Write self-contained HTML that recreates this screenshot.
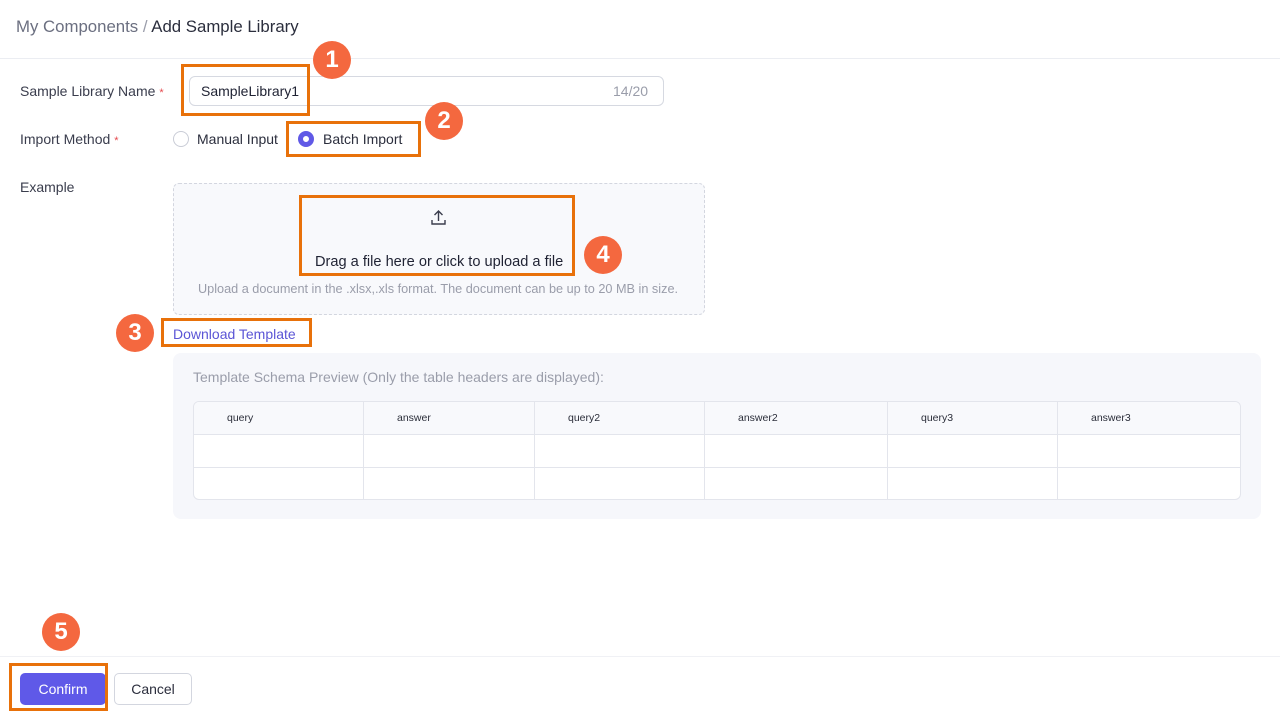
<!DOCTYPE html><html><head><style>
*{margin:0;padding:0;box-sizing:border-box}
body{width:1280px;height:720px;background:#fff;font-family:"Liberation Sans",sans-serif;position:relative;overflow:hidden;color:#1f2233}
.a{position:absolute}
.ob{position:absolute;border:3px solid #e8710a}
.bd{position:absolute;width:38px;height:38px;border-radius:50%;background:#f4683f;color:#fff;font-size:24px;font-weight:bold;text-align:center;line-height:38px}
.lbl{position:absolute;left:20px;font-size:14px;color:#3a3d4d}
.req{color:#e5484d;font-size:11px;margin-left:4px}
.radio{position:absolute;width:16px;height:16px;border-radius:50%;border:1px solid #c9ccd6;background:#fff}
table{border-collapse:separate;border-spacing:0}
td{border-right:1px solid #e3e5ec;border-bottom:1px solid #e3e5ec;height:33px;font-size:10.5px;color:#2b2e3a;padding-left:33px}
</style></head><body>
<div class="a" style="left:16px;top:17px;font-size:16.8px;color:#6b6f80">My Components <span style="color:#9a9daa">/</span> <span style="color:#2b2e3d">Add Sample Library</span></div>
<div class="a" style="left:0;top:58px;width:1280px;height:1px;background:#ebedf2"></div>

<div class="lbl" style="top:83px">Sample Library Name<span class="req">*</span></div>
<div class="a" style="left:189px;top:76px;width:475px;height:30px;border:1px solid #d6d9e1;border-radius:6px"></div>
<div class="a" style="left:201px;top:83px;font-size:14px">SampleLibrary1</div>
<div class="a" style="left:613px;top:83px;font-size:14px;color:#9a9daa">14/20</div>

<div class="lbl" style="top:131px">Import Method<span class="req">*</span></div>
<div class="radio" style="left:173px;top:131px"></div>
<div class="a" style="left:197px;top:131px;font-size:14px;color:#2b2e3d">Manual Input</div>
<div class="radio" style="left:298px;top:131px;border:5px solid #6059e6"></div>
<div class="a" style="left:323px;top:131px;font-size:14px;color:#2b2e3d">Batch Import</div>

<div class="lbl" style="top:179px">Example</div>
<div class="a" style="left:173px;top:183px;width:532px;height:132px;border:1px dashed #d3d6df;border-radius:6px;background:#f8f9fc"></div>
<svg class="a" style="left:430px;top:209px" width="17" height="17" viewBox="0 0 17 17" fill="none" stroke="#3a3d4d" stroke-width="1.4"><path d="M8.5 12V2M4.5 6l4-4 4 4M2 11v4h13v-4"/></svg>
<div class="a" style="left:315px;top:254px;font-size:14.6px">Drag a file here or click to upload a file</div>
<div class="a" style="left:198px;top:282px;font-size:12.7px;color:#9a9daa">Upload a document in the .xlsx,.xls format. The document can be up to 20 MB in size.</div>
<div class="a" style="left:173px;top:326px;font-size:14px;color:#5b55d6">Download Template</div>

<div class="a" style="left:173px;top:353px;width:1088px;height:166px;background:#f6f7fb;border-radius:8px"></div>
<div class="a" style="left:193px;top:369px;font-size:14px;color:#9a9daa">Template Schema Preview (Only the table headers are displayed):</div>
<div class="a" style="left:193px;top:401px;width:1048px;height:99px;border:1px solid #e3e5ec;border-radius:6px;overflow:hidden;background:#fff">
<table style="width:1048px"><colgroup><col style="width:170px"><col style="width:171px"><col style="width:170px"><col style="width:183px"><col style="width:170px"><col></colgroup>
<tr style="background:#f8f9fc"><td>query</td><td>answer</td><td>query2</td><td>answer2</td><td>query3</td><td style="border-right:0">answer3</td></tr>
<tr><td></td><td></td><td></td><td></td><td></td><td style="border-right:0"></td></tr>
<tr><td style="border-bottom:0"></td><td style="border-bottom:0"></td><td style="border-bottom:0"></td><td style="border-bottom:0"></td><td style="border-bottom:0"></td><td style="border:0"></td></tr>
</table></div>

<div class="a" style="left:0;top:656px;width:1280px;height:1px;background:#f0f1f5"></div>
<div class="a" style="left:20px;top:673px;width:86px;height:32px;background:#5f59e8;border-radius:5px;color:#fff;font-size:14px;text-align:center;line-height:32px">Confirm</div>
<div class="a" style="left:114px;top:673px;width:78px;height:32px;border:1px solid #d3d6df;border-radius:5px;font-size:14px;text-align:center;line-height:30px;color:#2b2e3d">Cancel</div>

<div class="ob" style="left:181px;top:64px;width:129px;height:52px"></div>
<div class="ob" style="left:286px;top:121px;width:135px;height:36px"></div>
<div class="ob" style="left:299px;top:195px;width:276px;height:81px"></div>
<div class="ob" style="left:161px;top:318px;width:151px;height:29px"></div>
<div class="ob" style="left:9px;top:663px;width:99px;height:48px"></div>

<div class="bd" style="left:313px;top:41px">1</div>
<div class="bd" style="left:425px;top:102px">2</div>
<div class="bd" style="left:116px;top:314px">3</div>
<div class="bd" style="left:584px;top:236px">4</div>
<div class="bd" style="left:42px;top:613px">5</div>
</body></html>
